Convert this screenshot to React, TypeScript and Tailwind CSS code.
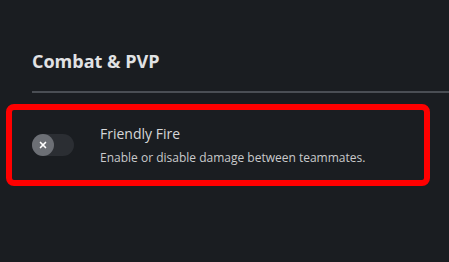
import { X } from 'lucide-react';

export default function App() {
  return (
    <div
      className="w-[449px] h-[262px] overflow-hidden bg-[#1a1d21] text-[#e3e4e6]"
      style={{ fontFamily: '"Open Sans", "Noto Sans", sans-serif' }}
    >
      <div className="pl-8 pt-[49px]">
        <h2 className="text-[18px] leading-[24px] font-bold text-[#e1e2e4]">Combat &amp; PVP</h2>
        <div className="mt-[18px] h-[2px] bg-[#4a4e54]" />

        {/* highlighted setting row */}
        <div className="-ml-[26px] mt-[11px] w-[424px] h-[82px] rounded-[8px] border-[6px] border-[#ff0000] flex items-center pl-5">
          <button className="w-[42px] h-[22px] rounded-full bg-[#2b2e33] flex items-center shrink-0">
            <span className="w-[22px] h-[22px] rounded-full bg-[#6c6f75] flex items-center justify-center">
              <X className="w-[10px] h-[10px] text-white" strokeWidth={4} />
            </span>
          </button>
          <div className="ml-[26px]">
            <div className="text-[14px] leading-[20px] text-[#d6d7d9]">Friendly Fire</div>
            <div className="mt-[5px] text-[12px] leading-[18px] text-[#c9cacc]">
              Enable or disable damage between teammates.
            </div>
          </div>
        </div>
      </div>
    </div>
  );
}
